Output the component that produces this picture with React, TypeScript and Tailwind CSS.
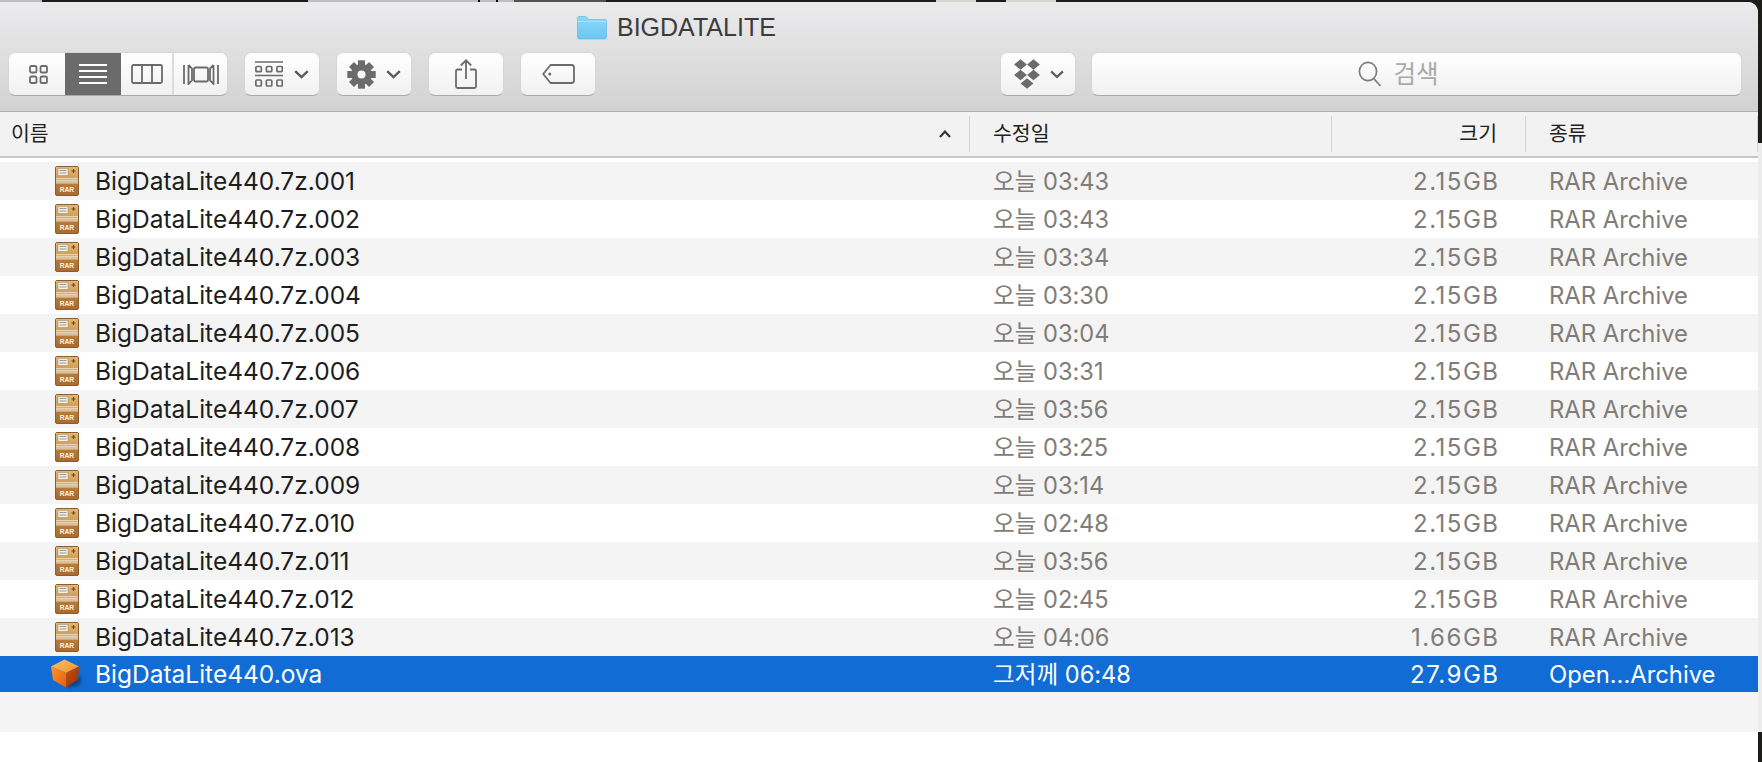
import React from 'react';

type FileRow = {
  name: string;
  time: string;
  size: string;
};

const files: FileRow[] = [
  { name: 'BigDataLite440.7z.001', time: '오늘 03:43', size: '2.15GB' },
  { name: 'BigDataLite440.7z.002', time: '오늘 03:43', size: '2.15GB' },
  { name: 'BigDataLite440.7z.003', time: '오늘 03:34', size: '2.15GB' },
  { name: 'BigDataLite440.7z.004', time: '오늘 03:30', size: '2.15GB' },
  { name: 'BigDataLite440.7z.005', time: '오늘 03:04', size: '2.15GB' },
  { name: 'BigDataLite440.7z.006', time: '오늘 03:31', size: '2.15GB' },
  { name: 'BigDataLite440.7z.007', time: '오늘 03:56', size: '2.15GB' },
  { name: 'BigDataLite440.7z.008', time: '오늘 03:25', size: '2.15GB' },
  { name: 'BigDataLite440.7z.009', time: '오늘 03:14', size: '2.15GB' },
  { name: 'BigDataLite440.7z.010', time: '오늘 02:48', size: '2.15GB' },
  { name: 'BigDataLite440.7z.011', time: '오늘 03:56', size: '2.15GB' },
  { name: 'BigDataLite440.7z.012', time: '오늘 02:45', size: '2.15GB' },
  { name: 'BigDataLite440.7z.013', time: '오늘 04:06', size: '1.66GB' },
];

const btn =
  'h-[44px] w-[76px] flex items-center justify-center rounded-[7px] bg-gradient-to-b from-white to-[#f1f1f1] border border-[#d6d6d6] border-b-[#a9a9a9]';

function Chevron({ w = 15 }: { w?: number }) {
  return (
    <svg width={w} height="9" viewBox="0 0 15 9" fill="none">
      <path d="M1.2 1.2 L7.5 7.2 L13.8 1.2" stroke="#5c5c5c" strokeWidth="2.4" />
    </svg>
  );
}

function FolderIcon() {
  return (
    <svg width="30" height="24" viewBox="0 0 30 24">
      <defs>
        <linearGradient id="folderFill" x1="0" y1="0" x2="0" y2="1">
          <stop offset="0" stopColor="#8ad8fb" />
          <stop offset="1" stopColor="#6cc6f2" />
        </linearGradient>
      </defs>
      <path d="M0.5 2 Q0.5 0.5 2 0.5 H9 L12 3.5 H28.5 Q29.5 3.5 29.5 5 V21.5 Q29.5 23 28 23 H2 Q0.5 23 0.5 21.5 Z" fill="url(#folderFill)" stroke="#5fb4e0" strokeWidth="0.6" />
      <path d="M0.8 5.4 H29.2" stroke="#a9e4fd" strokeWidth="1" />
    </svg>
  );
}

function GridIcon() {
  return (
    <svg width="19" height="19" viewBox="0 0 19 19" fill="none" stroke="#6b6b6b" strokeWidth="1.8">
      <rect x="1" y="1" width="6.5" height="6.5" rx="1.6" />
      <rect x="11.5" y="1" width="6.5" height="6.5" rx="1.6" />
      <rect x="1" y="11.5" width="6.5" height="6.5" rx="1.6" />
      <rect x="11.5" y="11.5" width="6.5" height="6.5" rx="1.6" />
    </svg>
  );
}

function ListIcon() {
  return (
    <svg width="28" height="20" viewBox="0 0 28 20" stroke="#ffffff" strokeWidth="1.8">
      <path d="M0 1 H28 M0 7 H28 M0 13 H28 M0 19 H28" />
    </svg>
  );
}

function ColumnsIcon() {
  return (
    <svg width="32" height="20" viewBox="0 0 32 20" fill="none" stroke="#6b6b6b" strokeWidth="1.8">
      <rect x="1" y="1" width="30" height="18" rx="1.5" />
      <path d="M11 1 V19 M21 1 V19" />
    </svg>
  );
}

function CoverFlowIcon() {
  return (
    <svg width="36" height="21" viewBox="0 0 36 21" fill="none" stroke="#6b6b6b" strokeWidth="1.8">
      <rect x="11" y="3.5" width="14" height="14" rx="1.5" />
      <path d="M1 1 V20 M5.5 1 V20 L9 16.5 V4.5 L5.5 1 M35 1 V20 M30.5 1 V20 L27 16.5 V4.5 L30.5 1" />
    </svg>
  );
}

function ArrangeIcon() {
  const squares = [0, 10.5, 21];
  return (
    <svg width="28" height="26" viewBox="0 0 28 26" fill="none" stroke="#6b6b6b" strokeWidth="1.7">
      <path d="M0 1 H28 M0 14.5 H28" />
      {squares.map((x) => (
        <rect key={`a${x}`} x={x + 0.9} y="5.5" width="5.4" height="5.2" rx="1" />
      ))}
      {squares.map((x) => (
        <rect key={`b${x}`} x={x + 0.9} y="19" width="5.4" height="6" rx="1" />
      ))}
    </svg>
  );
}

function GearIcon() {
  const teeth = [0, 45, 90, 135, 180, 225, 270, 315];
  return (
    <svg width="29" height="29" viewBox="0 0 29 29">
      {teeth.map((deg) => (
        <rect key={deg} x="11" y="0.3" width="7" height="6" fill="#6b6b6b" transform={`rotate(${deg} 14.5 14.5)`} />
      ))}
      <circle cx="14.5" cy="14.5" r="10.4" fill="#6b6b6b" />
      <circle cx="14.5" cy="14.5" r="4" fill="#f8f8f8" />
    </svg>
  );
}

function ShareIcon() {
  return (
    <svg width="22" height="30" viewBox="0 0 22 30" fill="none" stroke="#6b6b6b" strokeWidth="1.8">
      <path d="M7 10.5 H2.5 Q1 10.5 1 12 V27.5 Q1 29 2.5 29 H19.5 Q21 29 21 27.5 V12 Q21 10.5 19.5 10.5 H15" />
      <path d="M11 20 V1.5 M5.8 6.5 L11 1.3 L16.2 6.5" />
    </svg>
  );
}

function TagIcon() {
  return (
    <svg width="33" height="20" viewBox="0 0 33 20" fill="none" stroke="#6b6b6b" strokeWidth="1.8">
      <path d="M8.5 1 H29.5 Q32 1 32 3.5 V16.5 Q32 19 29.5 19 H8.5 L1.2 10 Z" strokeLinejoin="round" />
      <circle cx="7.8" cy="10" r="1.5" fill="#6b6b6b" stroke="none" />
    </svg>
  );
}

function DropboxIcon() {
  const d = 'M0 -5.2 L6.4 0 L0 5.2 L-6.4 0 Z';
  return (
    <svg width="30" height="30" viewBox="0 0 30 30" fill="#6b6b6b">
      <path d={d} transform="translate(8.5 5.5)" />
      <path d={d} transform="translate(21.5 5.5)" />
      <path d={d} transform="translate(8.5 16)" />
      <path d={d} transform="translate(21.5 16)" />
      <path d={d} transform="translate(15 24.5)" />
    </svg>
  );
}

function SearchIcon() {
  return (
    <svg width="24" height="26" viewBox="0 0 24 26" fill="none" stroke="#7c7c7c" strokeWidth="1.7">
      <ellipse cx="10" cy="10.5" rx="8.6" ry="9.2" />
      <path d="M15.8 17.6 L22.5 25" />
    </svg>
  );
}

function RarIcon({ id }: { id: string }) {
  return (
    <svg width="24" height="30" viewBox="0 0 24 30">
      <defs>
        <linearGradient id={`${id}t`} x1="0" y1="0" x2="0" y2="1">
          <stop offset="0" stopColor="#e2b872" />
          <stop offset="1" stopColor="#d0a05c" />
        </linearGradient>
        <linearGradient id={`${id}b`} x1="0" y1="0" x2="0" y2="1">
          <stop offset="0" stopColor="#d29545" />
          <stop offset="1" stopColor="#a86a2e" />
        </linearGradient>
      </defs>
      <rect x="0.5" y="0.5" width="23" height="29" rx="1.5" fill={`url(#${id}b)`} stroke="#8a5c2e" />
      <rect x="1" y="1" width="22" height="11" fill={`url(#${id}t)`} />
      <rect x="3" y="2.5" width="10" height="7" fill="#f4f1ea" stroke="#a58655" strokeWidth="0.5" />
      <path d="M4.5 4.5 H11.5 M4.5 7 H11.5" stroke="#8f8f8f" strokeWidth="0.9" />
      <path d="M18.5 3 V7 M16.5 5 H20.5" stroke="#6f4a1e" strokeWidth="1.2" />
      <rect x="1" y="12" width="22" height="5.5" fill="#e6d3b4" />
      <path d="M1 13.5 H23 M1 16 H23" stroke="#c9a77a" strokeWidth="0.8" />
      <text x="12" y="26" textAnchor="middle" fontSize="6.6" fontWeight="700" fill="#fff4e2" fontFamily="Liberation Sans, sans-serif">RAR</text>
    </svg>
  );
}

function CubeIcon() {
  return (
    <svg width="34" height="30" viewBox="0 0 34 30">
      <defs>
        <linearGradient id="cubeTop" x1="0" y1="0" x2="1" y2="1">
          <stop offset="0" stopColor="#ffc069" />
          <stop offset="1" stopColor="#f08f2c" />
        </linearGradient>
        <linearGradient id="cubeLeft" x1="0" y1="0" x2="1" y2="1">
          <stop offset="0" stopColor="#ff9630" />
          <stop offset="1" stopColor="#e25f10" />
        </linearGradient>
        <linearGradient id="cubeRight" x1="0" y1="0" x2="1" y2="1">
          <stop offset="0" stopColor="#c9520f" />
          <stop offset="1" stopColor="#8d3206" />
        </linearGradient>
        <filter id="cubeShadow" x="-30%" y="-30%" width="160%" height="160%">
          <feGaussianBlur stdDeviation="1.6" />
        </filter>
      </defs>
      <path d="M17 22 L31 17 L30 26 L17 29 Z" fill="#08305f" opacity="0.7" filter="url(#cubeShadow)" />
      <path d="M14.5 0.5 L29 7.5 L16 14 L1 7.5 Z" fill="url(#cubeTop)" />
      <path d="M1 7.5 L16 14 L16 28.5 L3 21 Z" fill="url(#cubeLeft)" />
      <path d="M16 14 L29 7.5 L28 20.5 L16 28.5 Z" fill="url(#cubeRight)" />
    </svg>
  );
}

function Row({ file, index }: { file: FileRow; index: number }) {
  return (
    <div className={`h-[38px] flex items-center text-[#7f7c79] ${index % 2 === 0 ? 'bg-[#f4f4f4]' : 'bg-white'}`}>
      <div className="w-[970px] flex items-center pl-[55px]">
        <RarIcon id={`rar${index}`} />
        <span className="ml-[16px] pt-[1px] text-[24.5px] text-[#1d1d1d]">{file.name}</span>
      </div>
      <div className="w-[362px] pl-[23px] pt-[1px] text-[23.6px]">{file.time}</div>
      <div className="w-[194px] pr-[26.5px] pt-[1px] text-right text-[24px] tracking-[1.5px]">{file.size}</div>
      <div className="pl-[23px] pt-[1px] text-[23.8px]">RAR Archive</div>
    </div>
  );
}

export default function App() {
  return (
    <div className="w-[1762px] h-[762px] flex flex-col overflow-hidden bg-[#1c1c18] font-['Inter','Noto_Sans_CJK_KR',sans-serif]">
      {/* bits of whatever is behind the window */}
      <div className="h-[2px] flex shrink-0">
        <div className="w-[42px] bg-[#bdbdbd]" />
        <div className="w-[266px] bg-[#1c1c18]" />
        <div className="w-[170px] bg-[#bdbdbd]" />
        <div className="w-[2px] bg-black" />
        <div className="w-[16px] bg-[#bdbdbd]" />
        <div className="w-[2px] bg-black" />
        <div className="w-[16px] bg-[#bdbdbd]" />
        <div className="w-[92px] bg-[#55534f]" />
        <div className="w-[330px] bg-[#1c1c18]" />
        <div className="w-[40px] bg-[#d8d8d0]" />
        <div className="w-[30px] bg-[#1c1c18]" />
        <div className="w-[50px] bg-[#d8d8d0]" />
        <div className="flex-1 bg-[#1c1c18]" />
      </div>

      <div className="flex flex-1 min-h-0">
        <div className="w-[1758px] flex flex-col bg-white rounded-tr-[10px] overflow-hidden">
          {/* toolbar */}
          <div className="h-[110px] shrink-0 bg-gradient-to-b from-[#ebebed] to-[#d2d2d2] border-b border-[#b0b0b0]">
            <div className="h-[50px] flex items-center pl-[577px] pt-[1px]">
              <FolderIcon />
              <span className="ml-[10px] text-[25px] text-[#3c3c3c] font-['Liberation_Sans',sans-serif]">BIGDATALITE</span>
            </div>
            <div className="flex items-center pl-[8px] pr-[16px]">
              <div className="h-[44px] w-[220px] flex rounded-[7px] overflow-hidden bg-gradient-to-b from-white to-[#f1f1f1] border border-[#d6d6d6] border-b-[#a9a9a9]">
                <div className="w-[56px] flex items-center justify-center pl-[2px]"><GridIcon /></div>
                <div className="w-[56px] flex items-center justify-center bg-[#6b6b6b]"><ListIcon /></div>
                <div className="w-[53px] flex items-center justify-center border-r-2 border-[#dcdcdc]"><ColumnsIcon /></div>
                <div className="flex-1 flex items-center justify-center"><CoverFlowIcon /></div>
              </div>
              <div className={`${btn} ml-[16px] gap-[11px]`}>
                <ArrangeIcon />
                <Chevron />
              </div>
              <div className={`${btn} ml-[16px] gap-[10px]`}>
                <GearIcon />
                <Chevron />
              </div>
              <div className={`${btn} ml-[16px]`}><ShareIcon /></div>
              <div className={`${btn} ml-[16px]`}><TagIcon /></div>
              <div className={`${btn} ml-[404px] gap-[8px]`}>
                <DropboxIcon />
                <Chevron w={14} />
              </div>
              <div className="h-[44px] ml-[15px] flex-1 flex items-center justify-center gap-[11px] pr-[36px] rounded-[7px] bg-gradient-to-b from-white to-[#f1f1f1] border border-[#d6d6d6] border-b-[#a9a9a9]">
                <SearchIcon />
                <span className="text-[24.5px] text-[#a9a9a9]">검색</span>
              </div>
            </div>
          </div>

          {/* column header */}
          <div className="h-[46px] shrink-0 flex items-center bg-[#f2f2f2] border-b-2 border-[#c8c8c8] text-[20.5px] text-[#222222]">
            <div className="w-[970px] h-[36px] flex items-center justify-between pl-[11px] pr-[18px] border-r border-[#d4d4d4]">
              <span>이름</span>
              <svg width="12" height="8" viewBox="0 0 12 8" fill="none">
                <path d="M1 7 L6 1.6 L11 7" stroke="#333333" strokeWidth="2.2" />
              </svg>
            </div>
            <div className="w-[362px] h-[36px] flex items-center pl-[23px] border-r border-[#d4d4d4]">수정일</div>
            <div className="w-[194px] h-[36px] flex items-center justify-end pr-[28px] border-r border-[#d4d4d4]">크기</div>
            <div className="flex-1 h-[36px] flex items-center pl-[23px] border-r border-[#d4d4d4]">종류</div>
          </div>

          {/* file list */}
          <div className="pt-[4px]">
            {files.map((file, i) => (
              <Row key={file.name} file={file} index={i} />
            ))}
            <div className="h-[36px] flex items-center bg-[#116cd6] text-white">
              <div className="w-[970px] flex items-center pl-[50px]">
                <CubeIcon />
                <span className="ml-[11px] pt-[1px] text-[24.5px]">BigDataLite440.ova</span>
              </div>
              <div className="w-[362px] pl-[23px] pt-[1px] text-[23.6px]">그저께 06:48</div>
              <div className="w-[194px] pr-[26.5px] pt-[1px] text-right text-[24px] tracking-[1.5px]">27.9GB</div>
              <div className="pl-[23px] pt-[1px] text-[23.8px]">Open...Archive</div>
            </div>
            <div className="h-[40px] bg-[#f4f4f4]" />
          </div>
        </div>

        {/* right edge */}
        <div className="flex-1 flex flex-col">
          <div className="h-[141px]" />
          <div className="h-[589px] bg-[#ececec]" />
          <div className="flex-1" />
        </div>
      </div>
    </div>
  );
}
